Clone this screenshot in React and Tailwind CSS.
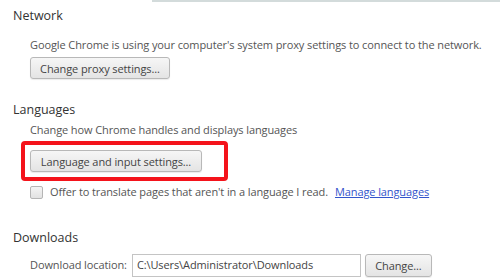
import React from 'react';

const Button = ({ children, className = '' }) => (
  <button
    className={`h-[22px] px-[8px] rounded-[3px] border border-[#b8b8b8] bg-gradient-to-b from-[#f6f6f6] to-[#e4e4e4] text-[11px] tracking-[-0.1px] text-[#444] shadow-[0_1px_1px_rgba(0,0,0,0.08)] leading-none whitespace-nowrap ${className}`}
  >
    {children}
  </button>
);

export default function App() {
  return (
    <div className="relative w-[500px] h-[278px] overflow-hidden bg-white font-['Open_Sans',sans-serif] text-[#555] text-[11px] tracking-[-0.1px]">
      <div className="ml-[152px] h-[2px] bg-[#d3dbdb]" />

      {/* Network */}
      <div className="pl-[13px] pt-[6px]">
        <h2 className="text-[12.5px] tracking-normal text-[#333] leading-[16px]">Network</h2>
        <div className="pl-[17px] pt-[13px]">
          <p className="leading-[16px] whitespace-nowrap">
            Google Chrome is using your computer's system proxy settings to connect to the network.
          </p>
          <Button className="mt-[4px] w-[140px]">Change proxy settings...</Button>
        </div>
      </div>

      {/* Languages */}
      <div className="pl-[13px] pt-[23px]">
        <h2 className="text-[12.5px] tracking-normal text-[#333] leading-[16px]">Languages</h2>
        <div className="pl-[17px] pt-[4px]">
          <p className="leading-[16px] whitespace-nowrap">Change how Chrome handles and displays languages</p>
          <div className="-ml-[9px] mt-[3px] w-[207px] h-[40px] rounded-[4px] border-[4px] border-[#f4131b] flex items-center pl-[5px]">
            <Button className="w-[172px]">Language and input settings...</Button>
          </div>
          <div className="flex items-center mt-[3px] leading-[16px] whitespace-nowrap">
            <span className="w-[13px] h-[13px] rounded-[2px] border border-[#b5b5b5] bg-gradient-to-b from-[#f4f4f4] to-[#e2e2e2]" />
            <span className="ml-[7px]">Offer to translate pages that aren't in a language I read.</span>
            <a className="ml-[7px] text-[#3355cc] underline">Manage languages</a>
          </div>
        </div>
      </div>

      {/* Downloads */}
      <div className="pl-[13px] pt-[30px]">
        <h2 className="text-[12.5px] tracking-normal text-[#333] leading-[16px]">Downloads</h2>
        <div className="pl-[17px] pt-[8px] flex items-center whitespace-nowrap">
          <span>Download location:</span>
          <div className="ml-[5px] w-[229px] h-[23px] border border-[#c4c4c4] flex items-center px-[4px] text-[#444]">
            C:\Users\Administrator\Downloads
          </div>
          <Button className="ml-[4px] w-[67px] h-[23px]">Change...</Button>
        </div>
      </div>
    </div>
  );
}
